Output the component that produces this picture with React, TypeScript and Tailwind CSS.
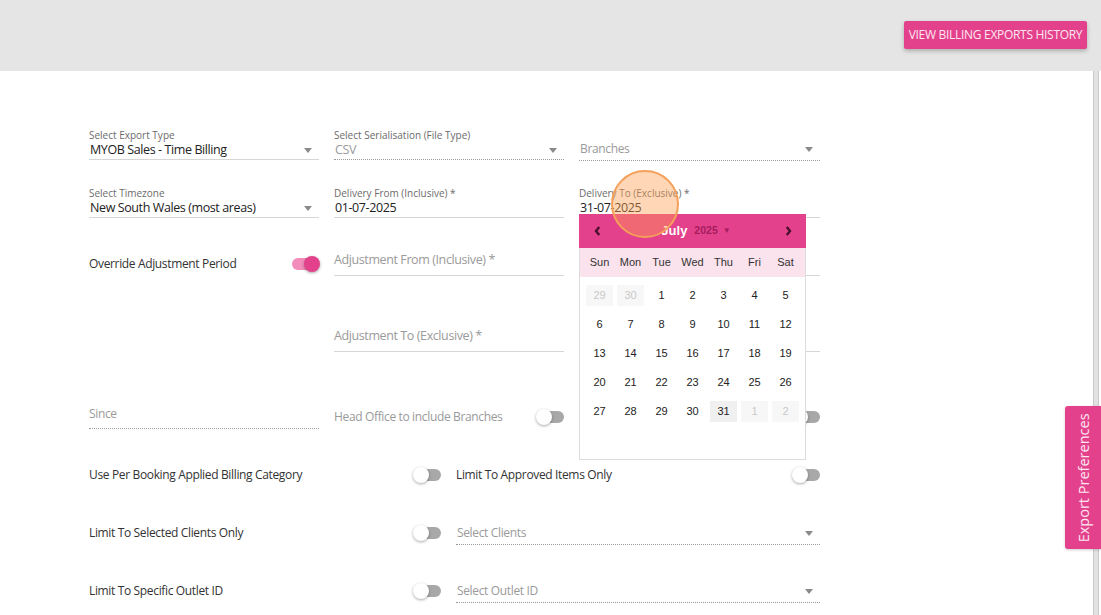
import React from "react";

const cols = "grid w-[731px] grid-cols-[230px_230px_241px] gap-x-[15px]";
const halves = "grid w-[731px] grid-cols-[352px_364px] gap-x-[15px]";

function Caret() {
  return (
    <svg width="8" height="5" viewBox="0 0 8 5" className="shrink-0 text-[#8a8a8a]">
      <path d="M0 0h8L4 5z" fill="currentColor" />
    </svg>
  );
}

function Toggle({ on = false }: { on?: boolean }) {
  return (
    <div className="relative h-[16px] w-[28px] shrink-0">
      <div
        className={`absolute top-[2px] h-[12px] rounded-full ${
          on ? "left-0 right-[6px] bg-[#f28dbb]" : "left-[6px] right-0 bg-[#a8a8a8]"
        }`}
      />
      <div
        className={`absolute top-0 h-[16px] w-[16px] rounded-full shadow-[0_1px_3px_rgba(0,0,0,0.35)] ${
          on ? "right-0 bg-[#e4418c]" : "left-0 bg-white"
        }`}
      />
    </div>
  );
}

function LabelledSelect({ label, value, caret = true }: { label: string; value: string; caret?: boolean }) {
  return (
    <div className="flex h-[31px] flex-col border-b border-[#d6d6d6]">
      <span className="text-[10px] leading-[12px] text-[#6b6b6b]">{label}</span>
      <div className="flex items-center justify-between pl-[1px] pr-[7px]">
        <span className="text-[12.5px] leading-[18px] tracking-[-0.4px] text-[#222]">{value}</span>
        {caret && <Caret />}
      </div>
    </div>
  );
}

function DottedSelect({ placeholder }: { placeholder: string }) {
  return (
    <div className="flex flex-col pt-[6px]">
      <div className="flex items-center justify-between pl-[1px] pr-[7px]">
        <span className="text-[12px] leading-[18px] tracking-[-0.35px] text-[#9a9a9a]">{placeholder}</span>
        <Caret />
      </div>
      <div className="mt-[2px] border-b border-dotted border-[#9a9a9a]" />
    </div>
  );
}

function PlainInput({ placeholder = "" }: { placeholder?: string }) {
  return (
    <div className="flex h-[31px] flex-col justify-end border-b border-[#d6d6d6] pb-[6px]">
      <span className="text-[12.5px] leading-[18px] tracking-[-0.4px] text-[#9a9a9a]">{placeholder}</span>
    </div>
  );
}

function ToggleRow({ label, on, muted }: { label: string; on?: boolean; muted?: boolean }) {
  return (
    <div className="flex h-[30px] items-center justify-between">
      <span className={`text-[12px] tracking-[-0.35px] ${muted ? "text-[#9a9a9a]" : "text-[#333]"}`}>{label}</span>
      <Toggle on={on} />
    </div>
  );
}

function Chevron({ dir }: { dir: "l" | "r" }) {
  return (
    <svg width="7" height="10" viewBox="0 0 7 10" className="text-[#4a1030]">
      <path
        d={dir === "l" ? "M5.2 1L2 5l3.2 4" : "M1.8 1L5 5 1.8 9"}
        fill="none"
        stroke="currentColor"
        strokeWidth="2.4"
      />
    </svg>
  );
}

const days = ["Sun", "Mon", "Tue", "Wed", "Thu", "Fri", "Sat"];
const cells: { n: number; out?: boolean; sel?: boolean }[] = [
  { n: 29, out: true },
  { n: 30, out: true },
  ...Array.from({ length: 31 }, (_, i) => ({ n: i + 1, sel: i === 30 })),
  { n: 1, out: true },
  { n: 2, out: true },
];

function Calendar() {
  return (
    <div className="absolute left-0 top-[27px] z-10 h-[246px] w-[227px] border border-[#dcdcdc] bg-white font-['Liberation_Sans',Arial,sans-serif]">
      <div className="-mx-px -mt-px flex h-[34px] items-center justify-between bg-[#e4418c] pl-[15px] pr-[14px]">
        <Chevron dir="l" />
        <div className="ml-[6px] flex items-center gap-[7px]">
          <span className="text-[13px] font-semibold text-white">July</span>
          <span className="text-[10.5px] font-bold text-[#a51d5c]">2025</span>
          <span className="-ml-[2px] text-[8px] text-[#a51d5c]">▼</span>
        </div>
        <Chevron dir="r" />
      </div>
      <div className="grid h-[29px] grid-cols-7 items-center bg-[#fbe3ee] px-[4px] text-[11px] text-[#333]">
        {days.map((d) => (
          <span key={d} className="text-center">
            {d}
          </span>
        ))}
      </div>
      <div className="grid grid-cols-7 px-[4px] pt-[4px]">
        {cells.map((c, i) => (
          <div key={i} className="flex h-[29px] items-center justify-center">
            <span
              className={`flex h-[21px] w-[27px] items-center justify-center text-[11px] ${
                c.out ? "bg-[#f7f7f7] text-[#c8c8c8]" : c.sel ? "bg-[#f0f0f0] text-[#222]" : "text-[#222]"
              }`}
            >
              {c.n}
            </span>
          </div>
        ))}
      </div>
    </div>
  );
}

export default function App() {
  return (
    <div className="relative h-[615px] w-[1101px] overflow-hidden bg-white font-['Open_Sans',sans-serif]">
      <header className="flex h-[71px] items-start justify-end bg-[#e5e5e5] pr-[14px] pt-[21px]">
        <button className="h-[28px] w-[183px] rounded-[2px] bg-[#e4418c] text-[12px] tracking-[-0.3px] text-[#fde6f0] shadow-[0_2px_4px_rgba(0,0,0,0.25)]">
          VIEW BILLING EXPORTS HISTORY
        </button>
      </header>

      <div className="flex h-[544px]">
        <main className="flex-1 pl-[89px] pt-[58px]">
          {/* export type / file type / branches */}
          <div className={cols}>
            <LabelledSelect label="Select Export Type" value="MYOB Sales - Time Billing" />
            <div className="flex h-[31px] flex-col">
              <span className="text-[10px] leading-[12px] text-[#6b6b6b]">Select Serialisation (File Type)</span>
              <div className="flex items-center justify-between pl-[1px] pr-[7px]">
                <span className="text-[12.5px] leading-[18px] tracking-[-0.4px] text-[#9a9a9a]">CSV</span>
                <Caret />
              </div>
              <div className="border-b border-dotted border-[#9a9a9a]" />
            </div>
            <div className="pt-[5px]">
              <DottedSelect placeholder="Branches" />
            </div>
          </div>

          {/* timezone / delivery dates */}
          <div className={`${cols} mt-[26px]`}>
            <LabelledSelect label="Select Timezone" value="New South Wales (most areas)" />
            <LabelledSelect label="Delivery From (Inclusive) *" value="01-07-2025" caret={false} />
            <div className="relative">
              <LabelledSelect label="Delivery To (Exclusive) *" value="31-07-2025" caret={false} />
              <Calendar />
            </div>
          </div>

          {/* adjustment */}
          <div className={`${cols} mt-[27px]`}>
            <div className="flex h-[31px] items-center justify-between pt-[7px]">
              <span className="text-[12px] tracking-[-0.35px] text-[#333]">Override Adjustment Period</span>
              <div className="mr-[-1px]">
                <Toggle on />
              </div>
            </div>
            <PlainInput placeholder="Adjustment From (Inclusive) *" />
            <PlainInput />
          </div>

          <div className={`${cols} mt-[45px]`}>
            <div />
            <PlainInput placeholder="Adjustment To (Exclusive) *" />
            <PlainInput />
          </div>

          <div className={`${cols} mt-[46px]`}>
            <div className="flex h-[31px] flex-col justify-end">
              <span className="text-[12px] leading-[18px] tracking-[-0.35px] text-[#9a9a9a]">Since</span>
              <div className="mt-[5px] border-b border-dotted border-[#9a9a9a]" />
            </div>
            <div className="pt-[4px]">
              <ToggleRow label="Head Office to include Branches" muted />
            </div>
            <div className="flex justify-end pt-[11px]">
              <Toggle />
            </div>
          </div>

          {/* flags */}
          <div className={`${halves} mt-[28px]`}>
            <ToggleRow label="Use Per Booking Applied Billing Category" />
            <ToggleRow label="Limit To Approved Items Only" />
          </div>
          <div className={`${halves} mt-[28px]`}>
            <ToggleRow label="Limit To Selected Clients Only" />
            <DottedSelect placeholder="Select Clients" />
          </div>
          <div className={`${halves} mt-[28px]`}>
            <ToggleRow label="Limit To Specific Outlet ID" />
            <DottedSelect placeholder="Select Outlet ID" />
          </div>
        </main>

        <div className="flex w-[9px] justify-start pl-[1px]">
          <div className="w-[6px] border-x border-[#c9c9c9] bg-[#e2e2e2]" />
        </div>
      </div>

      {/* side tab */}
      <div className="absolute right-0 top-[406px] flex h-[143px] w-[36px] items-center justify-center rounded-l-[3px] bg-[#e4418c] shadow-[0_1px_3px_rgba(0,0,0,0.2)]">
        <span className="-rotate-90 whitespace-nowrap text-[14.5px] text-[#fde6f0]">Export Preferences</span>
      </div>

      {/* click highlight */}
      <div className="pointer-events-none absolute left-[611px] top-[170px] z-20 h-[68px] w-[68px] rounded-full border-2 border-[#f5a05a] bg-[rgba(255,160,80,0.42)]" />
    </div>
  );
}
